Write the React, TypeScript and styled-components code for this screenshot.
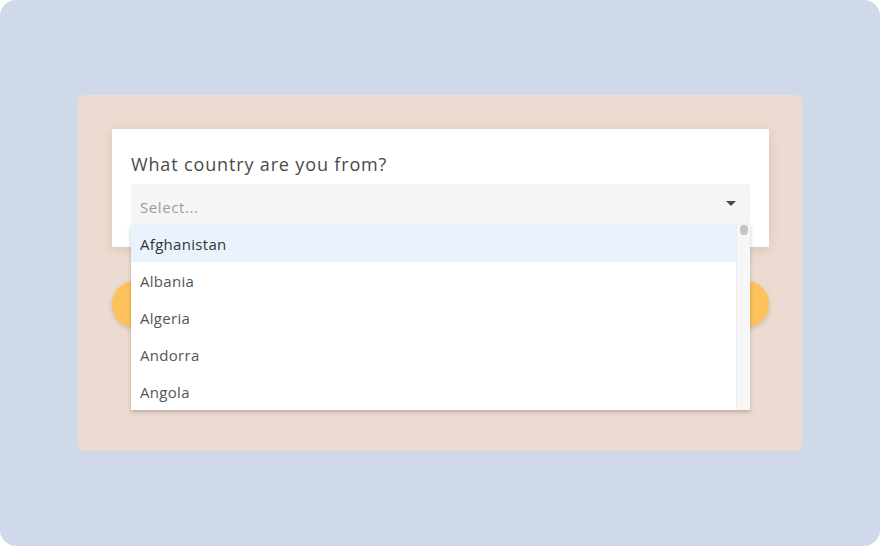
import React from "react";
import styled, { createGlobalStyle } from "styled-components";

const Global = createGlobalStyle`
  html, body { margin: 0; padding: 0; background: #ffffff; }
  body { font-family: "Open Sans", "Liberation Sans", sans-serif; }
`;

const Frame = styled.div`
  width: 880px;
  height: 546px;
  border-radius: 16px;
  background: #d0d9e9;
  display: flex;
  align-items: center;
  justify-content: center;
`;

const Panel = styled.div`
  width: 724px;
  height: 356px;
  box-sizing: border-box;
  padding: 34px 33px 34px 34px;
  background: #ecdbd0;
  border-radius: 6px;
  display: flex;
  flex-direction: column;
`;

const Card = styled.div`
  position: relative;
  z-index: 2;
  background: #ffffff;
  padding: 23px 19px 22px 19px;
  box-shadow: 0 2px 10px rgba(120, 90, 70, 0.18);
`;

const Question = styled.div`
  font-size: 18px;
  line-height: 24px;
  letter-spacing: 0.85px;
  color: #4a4a4a;
  margin-bottom: 8px;
`;

const SelectWrap = styled.div`
  position: relative;
`;

const SelectBox = styled.div`
  height: 41px;
  box-sizing: border-box;
  background: #f5f5f5;
  border-radius: 3px 3px 0 0;
  display: flex;
  align-items: center;
  justify-content: space-between;
  padding: 4px 14px 0 9px;
`;

const Placeholder = styled.span`
  font-size: 15px;
  letter-spacing: 0.6px;
  color: #9b9b9b;
`;

const Caret = styled.span`
  width: 0;
  height: 0;
  border-left: 5px solid transparent;
  border-right: 5px solid transparent;
  border-top: 5px solid #4a4a4a;
  margin-top: -6px;
`;

const Menu = styled.div`
  position: absolute;
  left: 0;
  right: 0;
  top: 100%;
  height: 185px;
  background: #ffffff;
  box-shadow: 0 2px 4px rgba(80, 60, 50, 0.3);
  display: flex;
  overflow: hidden;
`;

const Options = styled.div`
  flex: 1;
  display: flex;
  flex-direction: column;
`;

const Option = styled.div<{ $active?: boolean }>`
  flex: 0 0 37px;
  display: flex;
  align-items: center;
  padding-left: 9px;
  font-size: 15px;
  letter-spacing: 0.3px;
  color: ${(p) => (p.$active ? "#333333" : "#555555")};
  background: ${(p) => (p.$active ? "#eaf3fd" : "#ffffff")};
`;

const Track = styled.div`
  position: relative;
  width: 13px;
  background: #f7f7f7;
  border-left: 1px solid #ececec;
`;

const Thumb = styled.div`
  position: absolute;
  top: 0;
  left: 3px;
  width: 8px;
  height: 10px;
  border-radius: 4px;
  background: #c4c4c4;
`;

const ButtonRow = styled.div`
  margin-top: 34px;
  display: flex;
  justify-content: space-between;
`;

const RoundButton = styled.div`
  width: 46px;
  height: 46px;
  border-radius: 50%;
  background: #fdc25a;
  box-shadow: 0 2px 4px rgba(120, 80, 40, 0.25);
`;

const countries = ["Afghanistan", "Albania", "Algeria", "Andorra", "Angola"];

export default function App() {
  return (
    <>
      <Global />
      <Frame>
        <Panel>
          <Card>
            <Question>What country are you from?</Question>
            <SelectWrap>
              <SelectBox>
                <Placeholder>Select...</Placeholder>
                <Caret />
              </SelectBox>
              <Menu>
                <Options>
                  {countries.map((c, i) => (
                    <Option key={c} $active={i === 0}>
                      {c}
                    </Option>
                  ))}
                </Options>
                <Track>
                  <Thumb />
                </Track>
              </Menu>
            </SelectWrap>
          </Card>
          <ButtonRow>
            <RoundButton />
            <RoundButton />
          </ButtonRow>
        </Panel>
      </Frame>
    </>
  );
}
